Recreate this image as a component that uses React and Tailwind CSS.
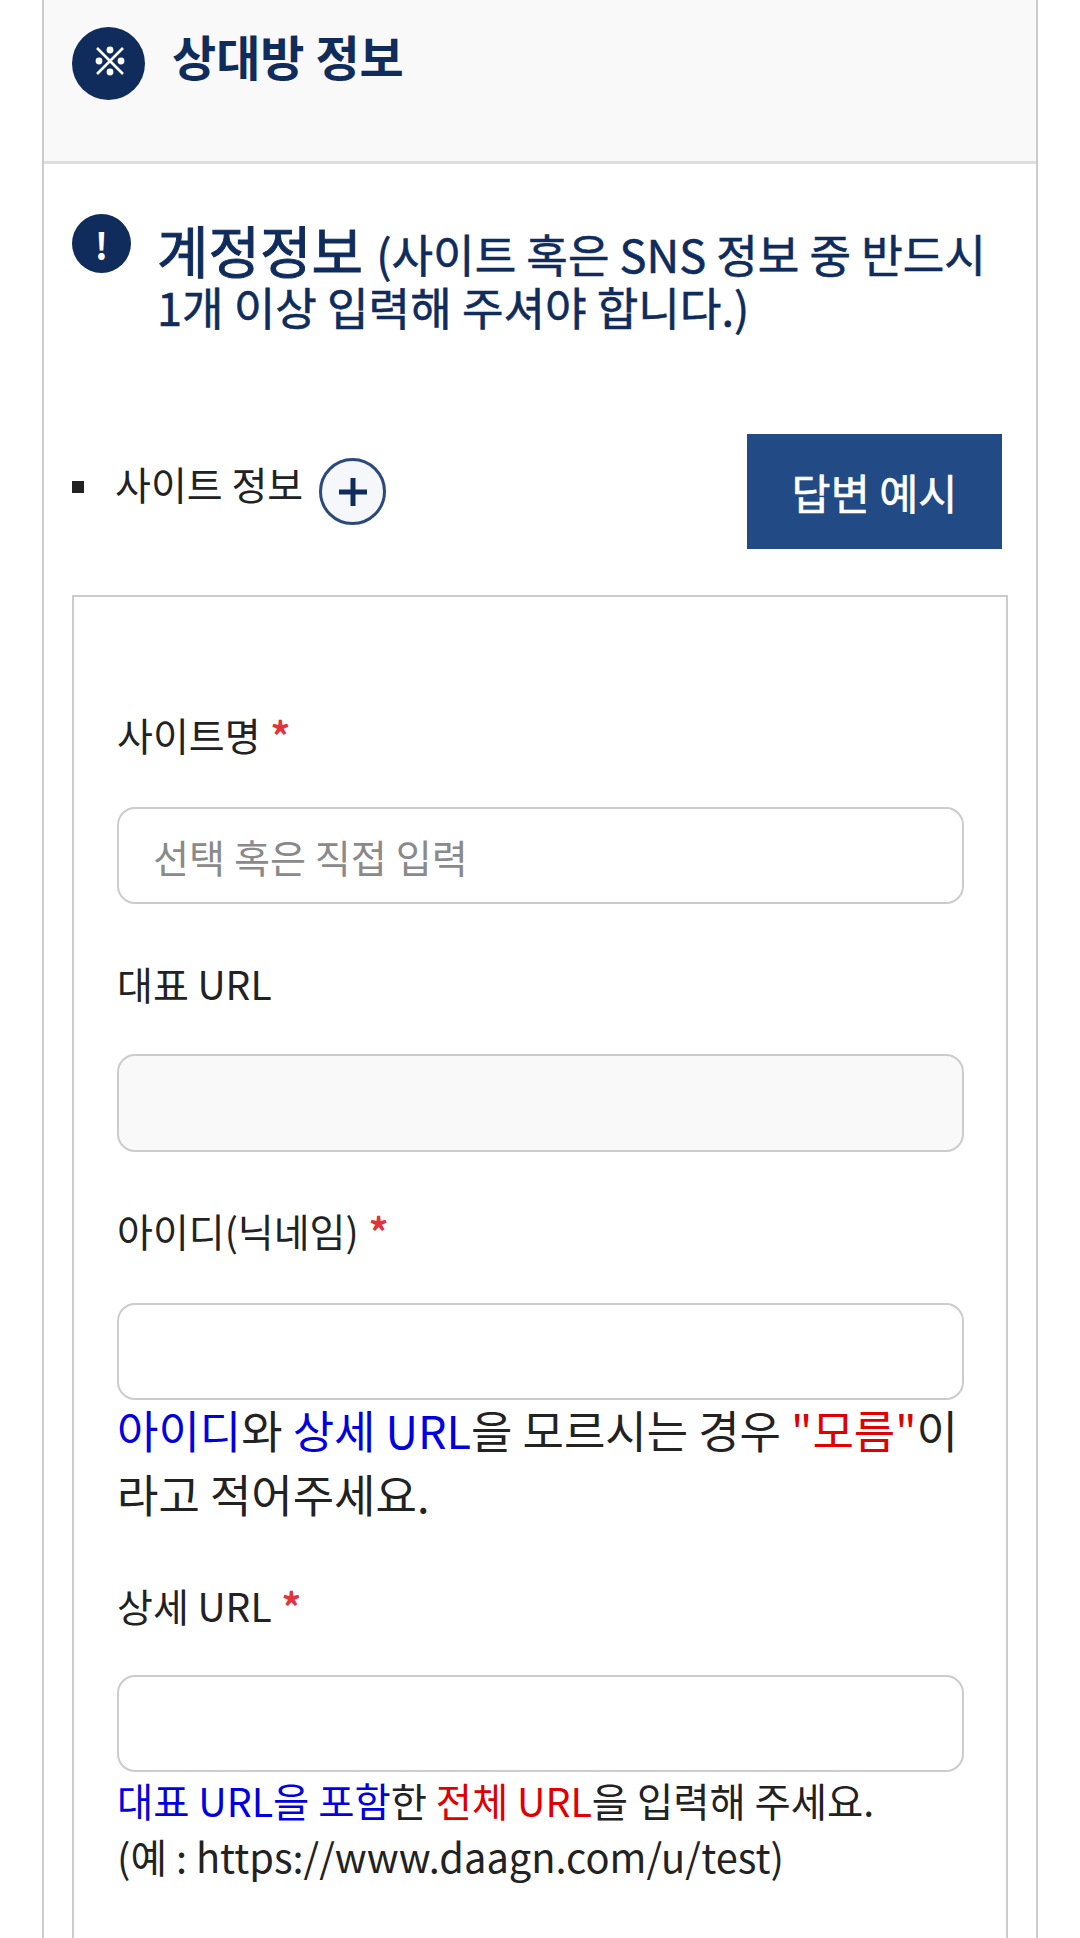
import React from 'react';

const fontStack = { fontFamily: '"Noto Sans CJK KR", "Noto Sans", sans-serif' };

const Star = () => <span className="ml-[10px] font-bold text-[#e0353b]">*</span>;

const Field = ({ label, required, placeholder, disabled, inputClass = 'mt-[44px]' }) => (
  <div>
    <label className="block h-[58px] text-[39px] leading-[58px] text-[#222]">
      {label}
      {required && <Star />}
    </label>
    <input
      type="text"
      disabled={disabled}
      placeholder={placeholder}
      className={`${inputClass} block w-[847px] rounded-[18px] border-2 border-[#ccc] px-[34px] text-[39.2px] outline-none placeholder:text-[#8a8a8a] ${disabled ? 'h-[98px] bg-[#f9f9f9]' : 'h-[97px] bg-white'}`}
    />
  </div>
);

export default function App() {
  return (
    <div className="h-[1938px] w-[1080px] overflow-hidden bg-white" style={fontStack}>
      <div className="ml-[42px] h-full w-[996px] border-x-2 border-[#ccc]">
        {/* Header */}
        <div className="flex h-[164px] gap-[27px] border-b-[3px] border-[#ddd] bg-[#f9f9f9] pl-[28px] pt-[27px]">
          <span className="flex h-[73px] w-[73px] items-center justify-center rounded-full bg-[#0f2c5c]">
            <svg width="32" height="32" viewBox="0 0 32 32" className="mb-[6px] ml-[3px]" aria-label="※">
              <path d="M3 3l26 26M29 3L3 29" stroke="#fff" strokeWidth="2.6" />
              <circle cx="16" cy="5" r="3.4" fill="#fff" />
              <circle cx="16" cy="27" r="3.4" fill="#fff" />
              <circle cx="5" cy="16" r="3.4" fill="#fff" />
              <circle cx="27" cy="16" r="3.4" fill="#fff" />
            </svg>
          </span>
          <h2 className="text-[48px] font-bold leading-[56px] text-[#0f2c5c]">상대방 정보</h2>
        </div>

        <div className="pl-[28px] pr-[28px] pt-[50px]">
          {/* Account info title */}
          <div className="flex items-start gap-[26px]">
            <span className="flex h-[59px] w-[59px] shrink-0 items-center justify-center rounded-full bg-[#0f2c5c] text-[36px] font-bold text-white">
              !
            </span>
            <p className="mt-[8px] text-[45.2px] leading-[53px] text-[#0f2c5c] [-webkit-text-stroke:0.6px_#0f2c5c]">
              <span className="mr-[3px] text-[56px] [-webkit-text-stroke:1px_#0f2c5c]">계정정보</span> (사이트 혹은 SNS 정보 중 반드시
              <br />
              1개 이상 입력해 주셔야 합니다.)
            </p>
          </div>

          {/* Site info row */}
          <div className="mt-[101px] flex items-center justify-between pr-[6px]">
            <div className="flex items-center">
              <span className="mb-[10px] h-[12px] w-[12px] bg-[#222]" />
              <span className="ml-[31px] pb-[17px] text-[39px] leading-[58px] text-[#222]">사이트 정보</span>
              <span className="ml-[16px] flex h-[67px] w-[67px] items-center justify-center rounded-full border-[3px] border-[#2a4a7c] bg-[#f5f7fa]">
                <svg width="30" height="30" viewBox="0 0 30 30">
                  <path d="M15 1v28M1 15h28" stroke="#0f2c5c" strokeWidth="5" />
                </svg>
              </span>
            </div>
            <button className="h-[115px] w-[255px] bg-[#224a85] text-[42.5px] text-white [-webkit-text-stroke:0.6px_#fff]">답변 예시</button>
          </div>

          {/* Form box */}
          <div className="mt-[46px] h-[1400px] border-2 border-[#ccc] pl-[43px] pt-[108px]">
            <Field label="사이트명" required placeholder="선택 혹은 직접 입력" />
            <div className="mt-[50px]">
              <Field label="대표 URL" disabled inputClass="mt-[42px]" />
            </div>
            <div className="mt-[49px]">
              <Field label="아이디(닉네임)" required inputClass="mt-[44px]" />
            </div>
            <p className="-mt-[2px] w-[847px] text-[45px] leading-[64px] text-[#222]">
              <span className="text-[#0000e0]">아이디</span>와 <span className="text-[#0000e0]">상세 URL</span>을 모르시는 경우{' '}
              <span className="text-[#e00000]">"모름"</span>이라고 적어주세요.
            </p>
            <div className="mt-[50px]">
              <Field label="상세 URL" required inputClass="mt-[41px]" />
            </div>
            <p className="text-[39.4px] leading-[56px] text-[#222]">
              <span className="text-[#0000e0]">대표 URL을 포함</span>한 <span className="text-[#e00000]">전체 URL</span>을 입력해 주세요.
              <br />
              <span className="text-[39.8px]">(예 : https://www.daagn.com/u/test)</span>
            </p>
          </div>
        </div>
      </div>
    </div>
  );
}
